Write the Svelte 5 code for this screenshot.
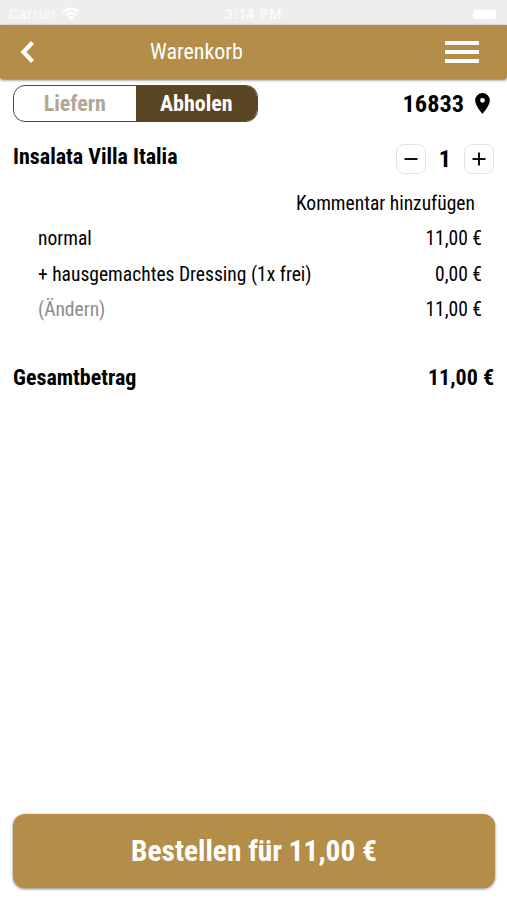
<script>
  let mode = 'pickup';
  let quantity = 1;

  const lines = [
    { label: 'normal', price: '11,00 €' },
    { label: '+ hausgemachtes Dressing (1x frei)', price: '0,00 €' },
    { label: '(Ändern)', price: '11,00 €', muted: true }
  ];
</script>

<div class="screen">
  <div class="status">
    <div class="carrier">
      <span>Carrier</span>
      <svg width="18" height="14" viewBox="0 0 18 14">
        <path d="M1 5a11.4 11.4 0 0 1 16 0M4 8.1a7.2 7.2 0 0 1 10 0" fill="none" stroke="#fff" stroke-width="2.6" />
        <path d="M9 13.5 6 10.4a4.3 4.3 0 0 1 6 0z" fill="#fff" />
      </svg>
    </div>
    <span class="time">3:14 PM</span>
    <span class="battery"></span>
  </div>

  <header>
    <button class="back" aria-label="Zurück">
      <svg width="16" height="24" viewBox="0 0 16 24">
        <path d="M12.5 2.5 3.5 12l9 9.5" fill="none" stroke="#fff" stroke-width="4.2" />
      </svg>
    </button>
    <h1>Warenkorb</h1>
    <button class="menu" aria-label="Menü">
      <i></i><i></i><i></i>
    </button>
  </header>

  <main>
    <div class="top">
      <div class="toggle">
        <button class:active={mode === 'delivery'} on:click={() => (mode = 'delivery')}>Liefern</button>
        <button class:active={mode === 'pickup'} on:click={() => (mode = 'pickup')}>Abholen</button>
      </div>
      <div class="zip">
        <span>16833</span>
        <svg width="15" height="21" viewBox="0 0 14 20">
          <path fill="#000" fill-rule="evenodd" d="M7 0a7 7 0 0 0-7 7c0 5.25 7 13 7 13s7-7.75 7-13a7 7 0 0 0-7-7zm0 9.3a2.3 2.3 0 1 1 0-4.6 2.3 2.3 0 0 1 0 4.6z" />
        </svg>
      </div>
    </div>

    <div class="item">
      <h2>Insalata Villa Italia</h2>
      <div class="stepper">
        <button aria-label="Weniger" on:click={() => (quantity = Math.max(1, quantity - 1))}>
          <svg width="14" height="14" viewBox="0 0 14 14"><path d="M0.5 7h13" stroke="#111" stroke-width="2" /></svg>
        </button>
        <span class="count">{quantity}</span>
        <button aria-label="Mehr" on:click={() => (quantity += 1)}>
          <svg width="14" height="14" viewBox="0 0 14 14"><path d="M0.5 7h13M7 0.5v13" stroke="#111" stroke-width="2" /></svg>
        </button>
      </div>
    </div>

    <div class="comment">Kommentar hinzufügen</div>

    {#each lines as line}
      <div class="line">
        <span class:muted={line.muted}>{line.label}</span>
        <span>{line.price}</span>
      </div>
    {/each}

    <div class="total">
      <span>Gesamtbetrag</span>
      <span>11,00 €</span>
    </div>
  </main>

  <button class="order">Bestellen für 11,00 €</button>
</div>

<style>
  :global(body) { background: #fff; }

  .screen {
    height: 900px;
    display: flex;
    flex-direction: column;
    font-family: "Roboto Condensed", Roboto, sans-serif;
    font-stretch: 75%;
    color: #000;
    background: #fff;
    overflow: hidden;
  }
  button {
    font: inherit; font-stretch: 75%; color: inherit;
    background: none; border: 0; padding: 0; margin: 0;
  }
  svg { display: block; flex-shrink: 0; }

  .status {
    height: 25px; box-sizing: border-box; padding: 3px 11px 0 9px;
    display: grid; grid-template-columns: 1fr auto 1fr; align-items: center;
    background: #f0eeed; color: #fcfcfc;
    font-family: Inter, sans-serif; font-stretch: 100%; font-size: 13px; line-height: 20px;
  }
  .carrier { display: flex; align-items: center; gap: 5px; letter-spacing: .7px; }
  .time { font-weight: 600; letter-spacing: 1.1px; padding-left: 2px; }
  .battery { justify-self: end; width: 23px; height: 9px; border-radius: 3px; background: #fff; }

  header {
    height: 54px; display: flex; align-items: center;
    background: #b48e49; color: #fff; flex-shrink: 0;
    border-radius: 0 0 3px 3px;
    box-shadow: 0 1px 3px rgba(0, 0, 0, .6);
  }
  .back { margin-left: 20px; }
  h1 { margin: 0 0 0 114px; font-size: 22px; font-weight: 400; line-height: 30px; }
  .menu {
    margin: 0 28px 0 auto; width: 34px;
    display: flex; flex-direction: column; gap: 5px;
  }
  .menu i { height: 4px; background: #fff; }

  main { flex: 1; padding: 6px 13px 0; }

  .top { display: flex; justify-content: space-between; align-items: center; height: 37px; }
  .toggle {
    width: 245px; height: 37px; box-sizing: border-box; display: flex;
    border: 1px solid #5b4623; border-radius: 12px; overflow: hidden;
  }
  .toggle button { flex: 1; font-size: 22px; font-weight: 700; color: #b0a895; }
  .toggle .active { background: #5b4623; color: #fff; }
  .zip { display: flex; align-items: center; gap: 11px; padding-right: 4px; font-size: 24.3px; font-weight: 700; }

  .item { display: flex; justify-content: space-between; height: 64px; }
  h2 { margin: 21px 0 0; font-size: 22px; font-weight: 700; line-height: 28px; }
  .stepper { display: flex; align-items: center; height: 30px; margin-top: 22px; }
  .stepper button {
    width: 30px; height: 30px; box-sizing: border-box;
    display: flex; align-items: center; justify-content: center;
    border: 1px solid #e4e4e4; border-radius: 8px;
  }
  .count { width: 38.5px; text-align: center; font-size: 24px; font-weight: 700; }

  .comment { padding-right: 19px; text-align: right; font-size: 19.55px; line-height: 35.4px; }
  .line {
    display: flex; justify-content: space-between; padding: 0 12px 0 25px;
    font-size: 19.55px; line-height: 35.4px;
  }
  .muted { color: #8c8c8c; }
  .total {
    display: flex; justify-content: space-between; margin-top: 35px;
    font-size: 22px; font-weight: 700; line-height: 30px;
  }

  .order {
    margin: 0 12px 12px 13px; height: 74px; flex-shrink: 0;
    background: #b48e49; color: #fff; border-radius: 12px;
    font-size: 29.4px; font-weight: 700;
    box-shadow: 0 1px 3px rgba(0, 0, 0, .5);
  }
</style>
